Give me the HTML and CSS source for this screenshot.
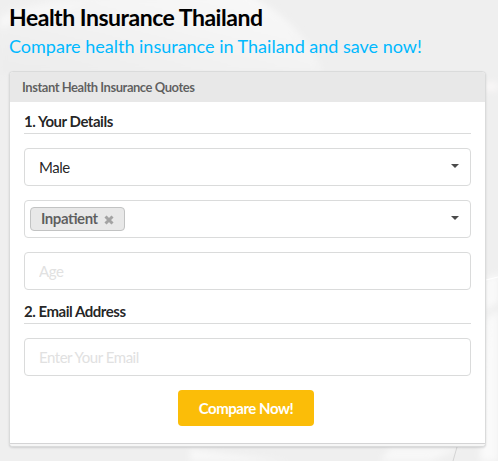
FILE: index.html
```html
<!DOCTYPE html>
<html lang="en">
<head>
<meta charset="utf-8">
<title>Health Insurance Thailand</title>
<link rel="stylesheet" href="styles.css">
</head>
<body>
<svg class="backdrop" viewBox="0 0 498 461" aria-hidden="true">
  <defs>
    <filter id="soft"><feGaussianBlur stdDeviation="3"/></filter>
    <linearGradient id="petal" x1="0" y1="1" x2="1" y2="0"><stop offset="0" stop-color="#ececec"/><stop offset="1" stop-color="#fafafa"/></linearGradient>
  </defs>
  <g filter="url(#soft)">
    <path d="M0 12Q40-4 100-5H250Q305 25 323 73H0Z" fill="url(#petal)"/>
    <path d="M0 18Q35 4 85 4L60 12Q20 14 0 30Z" fill="#f8f8f8"/>
    <path d="M484 82h14v9h-14z" fill="#f9f7f7"/>
    <path d="M486 280l12-8v30l-12 8zM486 320l12-10v151h-18z" fill="#fafafa"/>
    <path d="M190 449q60 8 100 12H190zM390 448h70l-30 13h-50z" fill="#f8f8f8"/>
  </g>
  <path d="M457 447l-4 14" fill="none" stroke="#d4d4d4"/>
  <path d="M486 280l12-3" fill="none" stroke="#fff"/>
</svg>
<main class="page">
  <h1 class="title">Health Insurance Thailand</h1>
  <p class="subtitle">Compare health insurance in Thailand and save now!</p>
  <section class="card">
    <h2 class="card-head">Instant Health Insurance Quotes</h2>
    <form class="form">
      <h3 class="section">1. Your Details</h3>
      <div class="field select"><span class="value">Male</span><svg class="caret" viewBox="0 0 8 4"><path d="M0 0h8L4 4z"/></svg></div>
      <div class="field select tags"><span class="tag">Inpatient<svg class="remove" viewBox="0 0 10 10"><path d="M1.500 1.500l7 7M8.500 1.500l-7 7"/></svg></span><svg class="caret" viewBox="0 0 8 4"><path d="M0 0h8L4 4z"/></svg></div>
      <input class="field" type="text" placeholder="Age">
      <h3 class="section second">2. Email Address</h3>
      <input class="field" type="email" placeholder="Enter Your Email">
      <button class="submit" type="button">Compare Now!</button>
    </form>
    <div class="stack"></div>
  </section>
</main>
</body>
</html>
```
FILE: styles.css
```css
* { box-sizing: border-box; }
body {
  margin: 0;
  height: 461px;
  overflow: hidden;
  background: #efefef;
  font: 15px/20px Lato, "Liberation Sans", sans-serif;
  letter-spacing: -.47px;
  font-feature-settings: "liga" 1;
  color: rgba(0, 0, 0, .87);
}
h1, h2, h3, p { margin: 0; }
.backdrop { position: absolute; left: 0; top: 0; width: 498px; height: 461px; z-index: -1; }
.page { padding: 3px 12px 0 9px; }
.title { font-size: 23px; line-height: 28px; font-weight: 700; color: #000; letter-spacing: -.48px; white-space: nowrap; }
.subtitle { margin-top: 2px; font-size: 18px; line-height: 26px; letter-spacing: 0; color: #00b9ff; white-space: nowrap; }
.card {
  margin-top: 12px;
  width: 477px;
  border: 1px solid #dadbdb;
  border-radius: 4px;
  background: #fff;
  box-shadow: 0 1px 2px rgba(34, 36, 38, .15);
  overflow: hidden;
}
.card-head {
  height: 30px;
  padding: 0 12px;
  background: #e8e8e8;
  color: rgba(0, 0, 0, .6);
  font-size: 13px;
  line-height: 31px;
  letter-spacing: -.47px;
  font-weight: 700;
}
.form { display: flex; flex-direction: column; height: 341px; padding: 7px 14px 0; }
.section { height: 25px; margin-bottom: 14px; border-bottom: 1px solid #dadbdb; font-size: 15px; line-height: 24px; font-weight: 700; }
.second { margin-top: -5px; }
.field {
  width: 447px;
  height: 38px;
  flex: none;
  margin: 0 0 14px;
  padding: 0 14px;
  border: 1px solid #dadbdb;
  border-radius: 4px;
  background: #fff;
  font: inherit;
  letter-spacing: inherit;
  color: inherit;
}
.field::placeholder { color: #e1e1e1; opacity: 1; }
.select { display: flex; align-items: center; justify-content: space-between; padding-right: 11px; }
.tags { padding-left: 5px; }
.value { padding-bottom: 1px; }
.caret { width: 8px; height: 4px; margin-bottom: 3px; fill: #4b4b4b; }
.tag {
  display: flex;
  align-items: center;
  width: 95px;
  height: 24px;
  margin-bottom: 1px;
  padding: 0 0 2px 10px;
  border: 1px solid #c2c3c3;
  border-radius: 4px;
  background: #e8e8e8;
  color: rgba(0, 0, 0, .6);
  font-weight: 700;
}
.remove { width: 10px; height: 10px; margin: 4px 0 0 6px; fill: none; stroke: #a3a3a3; stroke-width: 3; }
.submit {
  align-self: center;
  width: 136px;
  height: 36px;
  margin-right: 3px;
  padding: 0;
  border: 0;
  border-radius: 4px;
  background: #fbbd08;
  color: #fff;
  font: 700 15px/36px Lato, "Liberation Sans", sans-serif;
  letter-spacing: -.47px;
}
.stack { height: 3px; border-top: 1px solid #d4d4d5; background: #f6f6f6; }
```
